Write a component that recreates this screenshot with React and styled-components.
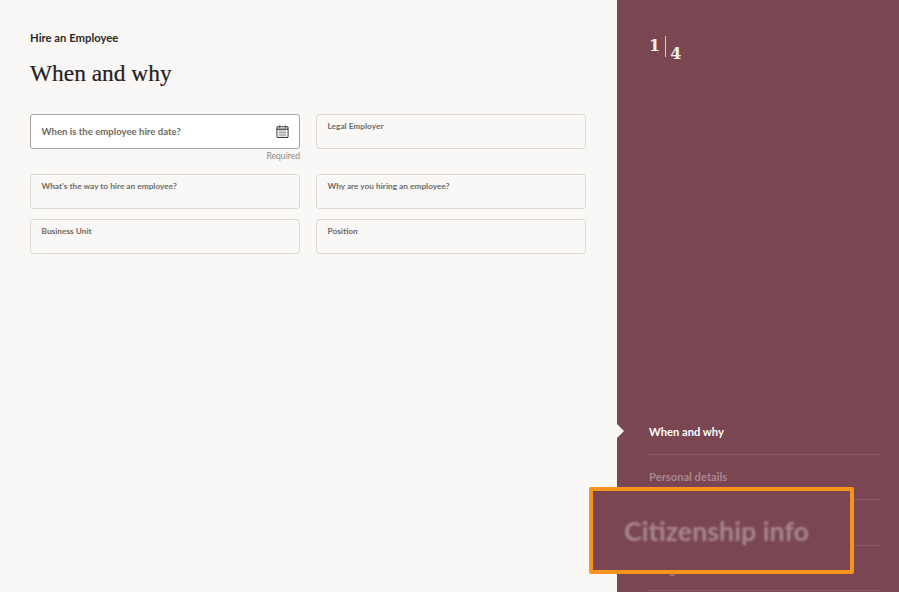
import React from 'react';
import styled, { createGlobalStyle } from 'styled-components';

const GlobalStyle = createGlobalStyle`
  html, body {
    margin: 0;
    padding: 0;
    height: 100%;
    overflow: hidden;
  }
  * {
    box-sizing: border-box;
  }
`;

const Page = styled.div`
  display: flex;
  width: 899px;
  height: 592px;
  font-family: 'Lato', sans-serif;
  background: #f9f8f6;
  overflow: hidden;
  position: relative;
`;

const Main = styled.main`
  width: 617px;
  padding: 30px 31px 0 30px;
`;

const Breadcrumb = styled.div`
  font-size: 11.3px;
  line-height: 15px;
  font-weight: 700;
  color: #2c2a28;
`;

const Title = styled.h1`
  margin: 12px 0 0;
  font-family: 'Liberation Serif', serif;
  font-size: 23.4px;
  line-height: 32px;
  font-weight: 400;
  color: #23211f;
  -webkit-text-stroke: 0.2px #23211f;
`;

const FormGrid = styled.div`
  display: grid;
  grid-template-columns: 270px 270px;
  column-gap: 16px;
  row-gap: 10px;
  margin-top: 25px;
`;

const FieldWrap = styled.div`
  display: flex;
  flex-direction: column;
  min-height: ${(p) => (p.$tall ? '50px' : '35px')};
`;

const Field = styled.div`
  height: 35px;
  padding: ${(p) => (p.$focus ? '0 10.5px' : '5.6px 10.5px 0')};
  display: flex;
  align-items: ${(p) => (p.$focus ? 'center' : 'flex-start')};
  justify-content: space-between;
  background: ${(p) => (p.$focus ? '#ffffff' : '#f9f8f6')};
  border: 1px solid ${(p) => (p.$focus ? '#aaa5a0' : '#dcd9d5')};
  border-radius: 3px;
`;

const FieldLabel = styled.span`
  font-size: ${(p) => (p.$focus ? '9.6px' : '8.3px')};
  line-height: 11px;
  font-weight: 700;
  color: #6f6b66;
`;

const Hint = styled.div`
  margin-top: 1px;
  text-align: right;
  font-size: 8.6px;
  line-height: 12px;
  color: #8b8782;
`;

const Side = styled.aside`
  flex: 1;
  position: relative;
  display: flex;
  flex-direction: column;
  justify-content: space-between;
  background: #7a4651;
  padding: 36px 19px 0 32px;
`;

const Counter = styled.div`
  display: flex;
  align-items: flex-start;
  font-family: 'DejaVu Serif', serif;
  font-weight: 700;
  color: #f4eeee;
`;

const CounterNow = styled.span`
  font-size: 16px;
  line-height: 20px;
`;

const CounterBar = styled.span`
  width: 1.5px;
  height: 21px;
  margin: 0 4px 0 4.5px;
  background: #d8c8cb;
`;

const CounterTotal = styled.span`
  font-size: 16px;
  line-height: 20px;
  margin-top: 8px;
`;

const Steps = styled.ul`
  list-style: none;
  margin: 0 0 1px;
  padding: 0;
`;

const Step = styled.li`
  position: relative;
  height: 45.5px;
  display: flex;
  align-items: center;
  border-bottom: 1px solid #8a5a64;
  font-size: 11.2px;
  font-weight: 700;
  color: ${(p) => (p.$active ? '#ffffff' : '#a98790')};

  &:last-child {
    padding-top: 4px;
  }

  ${(p) =>
    p.$active &&
    `
    &::before {
      content: '';
      position: absolute;
      left: -32px;
      top: 15px;
      border-left: 7px solid #f9f8f6;
      border-top: 7px solid transparent;
      border-bottom: 7px solid transparent;
    }
  `}
`;

const Callout = styled.div`
  position: absolute;
  left: 589px;
  top: 487px;
  width: 265px;
  height: 87px;
  padding-left: 31px;
  display: flex;
  align-items: center;
  background: #7a4651;
  border: 4px solid #f7941d;
  border-radius: 2px;
`;

const CalloutText = styled.span`
  font-size: 26.8px;
  font-weight: 700;
  color: #a98790;
  filter: blur(0.9px);
`;

const CalendarIcon = () => (
  <svg width="13" height="13" viewBox="0 0 14 14" fill="none" stroke="#3f3d3a" strokeWidth="1.1">
    <rect x="1" y="2" width="12" height="11.5" rx="1" />
    <path d="M1 4.5h12" strokeWidth="1.4" />
    <path d="M4 .5v2.5M10 .5v2.5" />
    <path d="M3 6.5h8M3 8.2h8M3 9.9h8M3 11.6h8" stroke="#8b8884" strokeWidth="0.9" />
  </svg>
);

const fields = [
  { label: 'When is the employee hire date?', focus: true, hint: 'Required' },
  { label: 'Legal Employer' },
  { label: "What's the way to hire an employee?" },
  { label: 'Why are you hiring an employee?' },
  { label: 'Business Unit' },
  { label: 'Position' },
];

const steps = ['When and why', 'Personal details', 'Citizenship info', 'Assignment'];

const App = () => {
  return (
    <Page>
      <GlobalStyle />
      <Main>
        <Breadcrumb>Hire an Employee</Breadcrumb>
        <Title>When and why</Title>
        <FormGrid>
          {fields.map((f) => (
            <FieldWrap key={f.label} $tall={f.hint}>
              <Field $focus={f.focus}>
                <FieldLabel $focus={f.focus}>{f.label}</FieldLabel>
                {f.focus && <CalendarIcon />}
              </Field>
              {f.hint && <Hint>{f.hint}</Hint>}
            </FieldWrap>
          ))}
        </FormGrid>
      </Main>
      <Side>
        <Counter>
          <CounterNow>1</CounterNow>
          <CounterBar />
          <CounterTotal>4</CounterTotal>
        </Counter>
        <Steps>
          {steps.map((s, i) => (
            <Step key={s} $active={i === 0}>{s}</Step>
          ))}
        </Steps>
      </Side>
      <Callout>
        <CalloutText>Citizenship info</CalloutText>
      </Callout>
    </Page>
  );
};

export default App;
